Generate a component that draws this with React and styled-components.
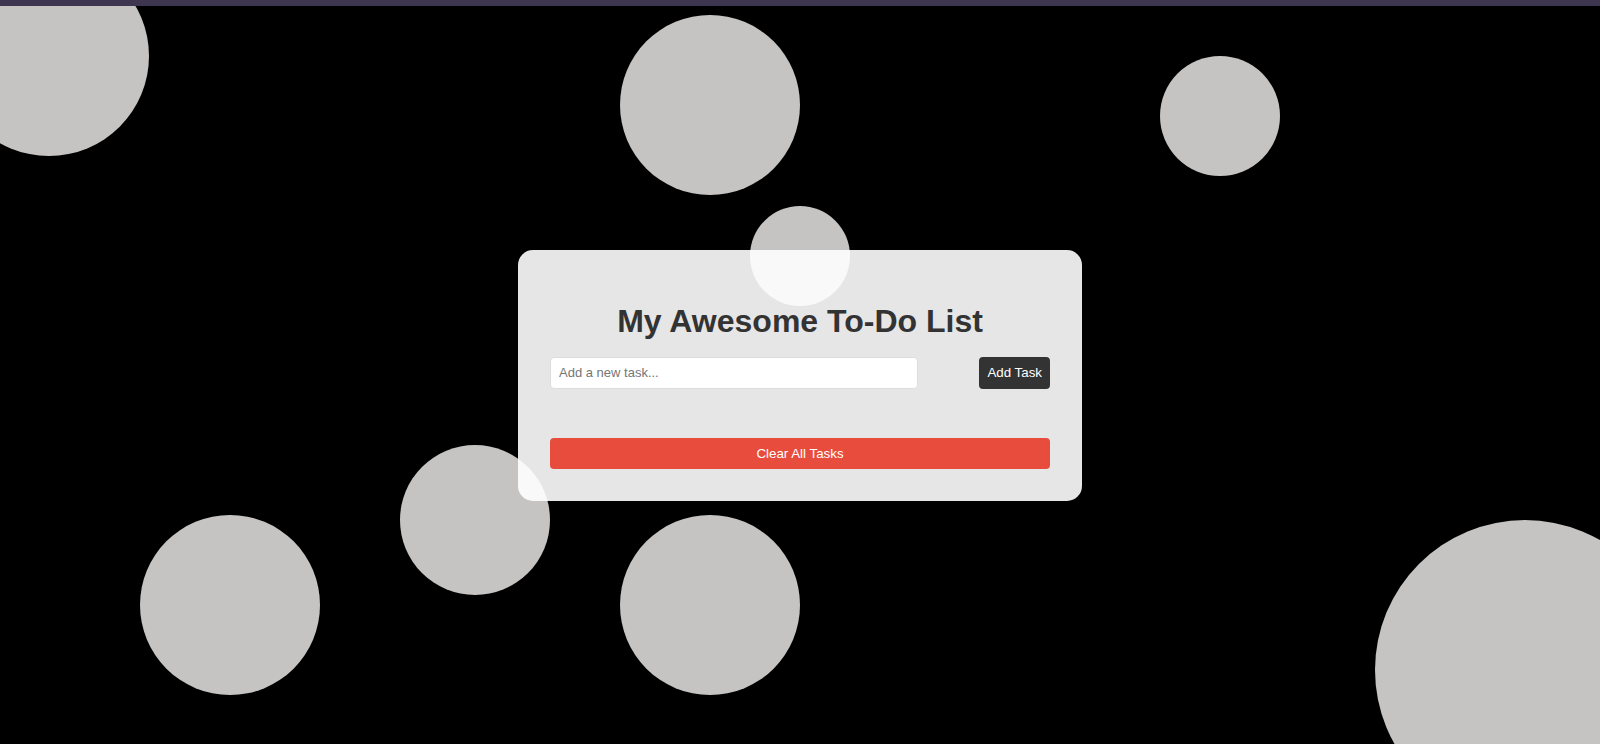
import React, { useState } from 'react';
import styled, { createGlobalStyle } from 'styled-components';

const GlobalStyle = createGlobalStyle`
  html, body {
    margin: 0;
    padding: 0;
    height: 100%;
    background: #000;
    font-family: "Liberation Sans", Arial, sans-serif;
  }
  #root {
    height: 100%;
  }
`;

// Styled components
const Page = styled.div`
  display: flex;
  flex-direction: column;
  height: 100vh;
  overflow: hidden;
`;

const TopBar = styled.div`
  height: 6px;
  flex-shrink: 0;
  background-color: #3e3550;
  position: relative;
  z-index: 2;
`;

const Stage = styled.main`
  position: relative;
  flex: 1;
  display: flex;
  align-items: center;
  justify-content: center;
`;

const Bubble = styled.div`
  position: absolute;
  left: ${(p) => p.$left}px;
  top: ${(p) => p.$top}px;
  width: ${(p) => p.$size}px;
  height: ${(p) => p.$size}px;
  border-radius: 50%;
  background-color: #c5c4c2;
`;

const Card = styled.div`
  position: relative;
  z-index: 1;
  width: 500px;
  padding: 32px;
  background-color: rgba(255, 255, 255, 0.9);
  border-radius: 15px;
`;

const Title = styled.h1`
  margin: 21px 0 17px;
  font-size: 32px;
  line-height: 37px;
  font-weight: bold;
  text-align: center;
  color: #333;
`;

const InputRow = styled.div`
  display: flex;
  justify-content: space-between;
  align-items: center;
`;

const TaskInput = styled.input`
  box-sizing: border-box;
  width: 368px;
  height: 32px;
  padding: 0 8px;
  border: 1px solid #ddd;
  border-radius: 4px;
  background: #fff;
  font-family: inherit;
  font-size: 13px;
  color: #333;
  outline: none;

  &::placeholder {
    color: #757575;
  }
`;

const Button = styled.button`
  box-sizing: border-box;
  height: ${(p) => (p.$wide ? 31 : 32)}px;
  width: ${(p) => (p.$wide ? '100%' : 'auto')};
  padding: 0 8px;
  border: none;
  border-radius: 4px;
  cursor: pointer;
  font-family: inherit;
  font-size: 13.33px;
  color: #fff;
  background-color: ${(p) => (p.$danger ? '#e74c3c' : '#333')};

  &:hover {
    background-color: ${(p) => (p.$danger ? '#d84334' : '#222')};
  }
`;

const TaskList = styled.ul`
  list-style-type: none;
  margin: 0;
  padding: 0;
  min-height: 49px;
`;

const TaskItem = styled.li`
  padding: 8px 0;
  border-bottom: 1px solid #ccc;
  color: #333;
  font-size: 14px;
`;

// bubble centres/diameters, in page coords (the stage starts below the 6px bar)
const bubbles = [
  { x: 49, y: 56, size: 200 },
  { x: 710, y: 105, size: 180 },
  { x: 1220, y: 116, size: 120 },
  { x: 800, y: 256, size: 100 },
  { x: 475, y: 520, size: 150 },
  { x: 230, y: 605, size: 180 },
  { x: 710, y: 605, size: 180 },
  { x: 1525, y: 670, size: 300 },
];

function App() {
  const [tasks, setTasks] = useState([]);
  const [text, setText] = useState('');

  const addTask = () => {
    if (!text.trim()) return;
    setTasks([...tasks, { id: Date.now(), text: text.trim() }]);
    setText('');
  };

  return (
    <>
      <GlobalStyle />
      <Page>
        <TopBar />
        <Stage>
          {bubbles.map((b, i) => (
            <Bubble
              key={i}
              $size={b.size}
              $left={b.x - b.size / 2}
              $top={b.y - b.size / 2 - 6}
            />
          ))}
          <Card>
            <Title>My Awesome To-Do List</Title>
            <InputRow>
              <TaskInput
                placeholder="Add a new task..."
                value={text}
                onChange={(e) => setText(e.target.value)}
                onKeyDown={(e) => e.key === 'Enter' && addTask()}
              />
              <Button onClick={addTask}>Add Task</Button>
            </InputRow>
            <TaskList>
              {tasks.map((t) => (
                <TaskItem key={t.id}>{t.text}</TaskItem>
              ))}
            </TaskList>
            <Button $danger $wide onClick={() => setTasks([])}>
              Clear All Tasks
            </Button>
          </Card>
        </Stage>
      </Page>
    </>
  );
}

export default App;
